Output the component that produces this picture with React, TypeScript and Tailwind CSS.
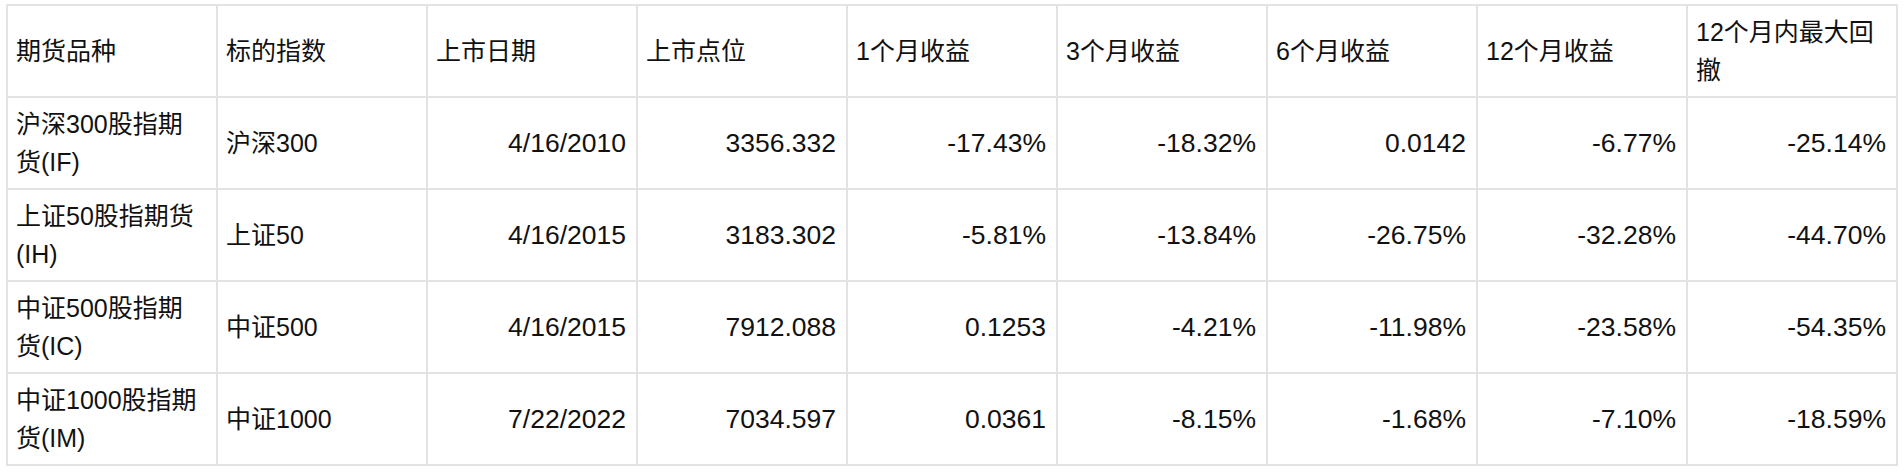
const headers: string[][] = [
  ["期货品种"],
  ["标的指数"],
  ["上市日期"],
  ["上市点位"],
  ["1个月收益"],
  ["3个月收益"],
  ["6个月收益"],
  ["12个月收益"],
  ["12个月内最大回", "撤"],
];

type Row = {
  name: string[];
  index: string;
  values: string[];
};

const rows: Row[] = [
  {
    name: ["沪深300股指期", "货(IF)"],
    index: "沪深300",
    values: ["4/16/2010", "3356.332", "-17.43%", "-18.32%", "0.0142", "-6.77%", "-25.14%"],
  },
  {
    name: ["上证50股指期货", "(IH)"],
    index: "上证50",
    values: ["4/16/2015", "3183.302", "-5.81%", "-13.84%", "-26.75%", "-32.28%", "-44.70%"],
  },
  {
    name: ["中证500股指期", "货(IC)"],
    index: "中证500",
    values: ["4/16/2015", "7912.088", "0.1253", "-4.21%", "-11.98%", "-23.58%", "-54.35%"],
  },
  {
    name: ["中证1000股指期", "货(IM)"],
    index: "中证1000",
    values: ["7/22/2022", "7034.597", "0.0361", "-8.15%", "-1.68%", "-7.10%", "-18.59%"],
  },
];

const cell = "border-2 border-[#e3e3e3] pl-[8px] pr-[10px] py-[7px] align-middle";

function Lines({ parts }: { parts: string[] }) {
  return (
    <>
      {parts.map((p) => (
        <span key={p} className="block whitespace-nowrap">
          {p}
        </span>
      ))}
    </>
  );
}

export default function App() {
  return (
    <div
      className="min-h-screen bg-white pt-[4px] px-[6px] text-[25px] leading-[38px] text-[#111]"
      style={{ fontFamily: '"Liberation Sans", Arial, "Noto Sans CJK SC", sans-serif' }}
    >
      <table className="w-full table-fixed border-collapse border-2 border-[#e3e3e3]">
        <thead>
          <tr>
            {headers.map((h) => (
              <th key={h[0]} className={`${cell} text-left font-normal`}>
                <Lines parts={h} />
              </th>
            ))}
          </tr>
        </thead>
        <tbody>
          {rows.map((r) => (
            <tr key={r.index}>
              <td className={`${cell} text-left`}>
                <Lines parts={r.name} />
              </td>
              <td className={`${cell} text-left`}>{r.index}</td>
              {r.values.map((v, i) => (
                <td key={i} className={`${cell} text-right text-[26.5px]`}>
                  {v}
                </td>
              ))}
            </tr>
          ))}
        </tbody>
      </table>
    </div>
  );
}
